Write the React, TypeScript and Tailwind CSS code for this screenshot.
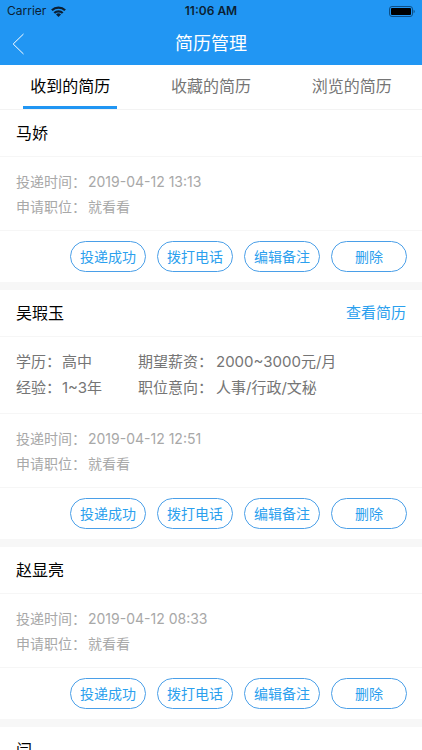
import { useState } from "react"
import clsx from "clsx"

interface Resume {
  id: number
  name: string
  delivery?: { time: string; position: string }
  // only filled in once the applicant has an online resume
  detail?: {
    education: string
    experience: string
    salary: string
    intention: string
  }
}

const tabs = ["收到的简历", "收藏的简历", "浏览的简历"]

const actions = ["投递成功", "拨打电话", "编辑备注", "删除"]

const resumes: Resume[] = [
  { id: 1, name: "马娇", delivery: { time: "2019-04-12 13:13", position: "就看看" } },
  {
    id: 2,
    name: "吴瑕玉",
    delivery: { time: "2019-04-12 12:51", position: "就看看" },
    detail: { education: "高中", experience: "1~3年", salary: "2000~3000元/月", intention: "人事/行政/文秘" },
  },
  { id: 3, name: "赵显亮", delivery: { time: "2019-04-12 08:33", position: "就看看" } },
  { id: 4, name: "闫" },
]

const StatusBar = () => (
  <div className="grid h-[22px] grid-cols-3 items-center px-[7px] text-xs text-[#0b1f33]">
    <div className="flex items-center gap-[5px]">
      <span>Carrier</span>
      <svg width="15" height="11" viewBox="0 0 15 11" fill="none" stroke="currentColor" strokeWidth="2.3">
        <path d="M0.9 4.3a9.4 9.4 0 0 1 13.2 0" />
        <path d="M3.3 7a6 6 0 0 1 8.4 0" />
        <path d="M7.5 11 5 8.6a3.5 3.5 0 0 1 5 0z" fill="currentColor" stroke="none" />
      </svg>
    </div>
    <span className="text-center font-semibold whitespace-nowrap">11:06 AM</span>
    <svg className="justify-self-end" width="26" height="11" viewBox="0 0 26 11">
      <rect x="0.5" y="0.5" width="23" height="10" rx="2.5" fill="none" stroke="#0d4f86" />
      <rect x="2" y="2" width="20" height="7" rx="1" fill="#000" />
      <path d="M24.6 3.7c1.5.5 1.5 3.1 0 3.6z" fill="#0d4f86" />
    </svg>
  </div>
)

const NavBar = () => (
  <div className="grid h-[43px] grid-cols-[48px_1fr_48px] items-center">
    <button type="button" aria-label="返回" className="flex h-full items-center pl-3">
      <svg width="13" height="22" viewBox="0 0 13 22" fill="none" stroke="#fff" strokeWidth="1">
        <path d="M11.5 1 1.2 11l10.3 10" />
      </svg>
    </button>
    <h1 className="text-center text-lg text-white">简历管理</h1>
  </div>
)

const Field = ({ label, value, labelClass }: { label: string; value: string; labelClass: string }) => (
  <div className="flex whitespace-nowrap">
    <dt className={labelClass}>{label}：</dt>
    <dd>{value}</dd>
  </div>
)

const ResumeCard = ({ resume }: { resume: Resume }) => (
  <li className="bg-white">
    <div className="flex h-[47px] items-center justify-between border-b border-[#f6f6f6] px-4">
      <h2 className="text-base text-black">{resume.name}</h2>
      {resume.detail && (
        <a href="#resume" className="text-[15px] text-[#2ba0ee]">
          查看简历
        </a>
      )}
    </div>

    {resume.detail && (
      <dl className="grid grid-cols-[122px_1fr] border-b border-[#f6f6f6] px-4 py-3 text-[15px] leading-[26px] text-[#757575]">
        <Field label="学历" value={resume.detail.education} labelClass="w-[46px]" />
        <Field label="期望薪资" value={resume.detail.salary} labelClass="w-[78px]" />
        <Field label="经验" value={resume.detail.experience} labelClass="w-[46px]" />
        <Field label="职位意向" value={resume.detail.intention} labelClass="w-[78px]" />
      </dl>
    )}

    {resume.delivery && (
      <>
        <dl className="border-b border-[#f6f6f6] px-4 pt-3 pb-[11px] text-sm leading-[25px] text-[#a8a8a8]">
          <Field label="投递时间" value={resume.delivery.time} labelClass="w-[72px]" />
          <Field label="申请职位" value={resume.delivery.position} labelClass="w-[72px]" />
        </dl>

        <div className="flex justify-end gap-[11px] px-[15px] py-[10px]">
          {actions.map((action) => (
            <button
              key={action}
              type="button"
              className="h-[31px] w-[76px] rounded-full border border-[#4a9fe8] text-sm text-[#2ba0ee]"
            >
              {action}
            </button>
          ))}
        </div>
      </>
    )}
  </li>
)

const App = () => {
  const [active, setActive] = useState(0)

  return (
    <div className="flex h-screen flex-col bg-[#f7f7f7] font-[Inter,'Noto_Sans_CJK_SC',sans-serif]">
      <header className="shrink-0 bg-[#2196f3]">
        <StatusBar />
        <NavBar />
      </header>

      <nav className="grid h-[45px] shrink-0 grid-cols-3 border-b border-[#f3f3f3] bg-white">
        {tabs.map((tab, i) => (
          <button
            key={tab}
            type="button"
            onClick={() => setActive(i)}
            className={clsx("flex flex-col items-center", i === active ? "text-black" : "text-[#757575]")}
          >
            <span className="flex flex-1 items-center text-base">{tab}</span>
            <span className={clsx("h-[3px] w-2/3", i === active && "bg-[#2196f3]")} />
          </button>
        ))}
      </nav>

      <ul className="flex min-h-0 flex-1 flex-col gap-2 overflow-y-auto [scrollbar-width:none]">
        {resumes.map((resume) => (
          <ResumeCard key={resume.id} resume={resume} />
        ))}
      </ul>
    </div>
  )
}

export default App
